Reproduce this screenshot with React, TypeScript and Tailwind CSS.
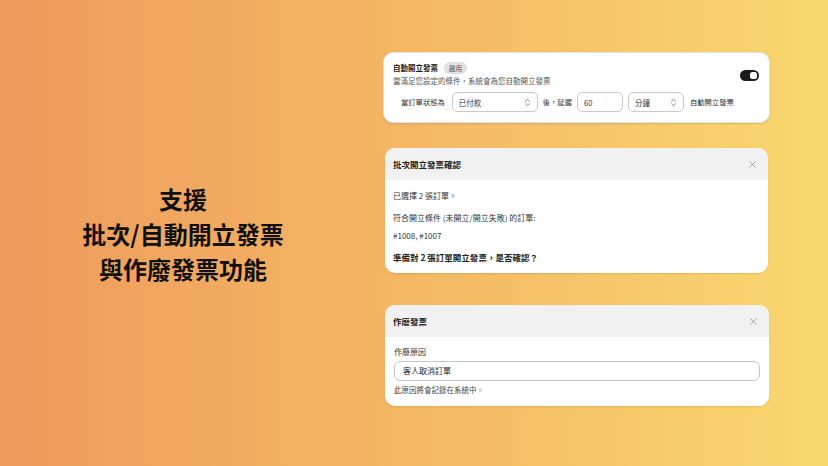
import { X } from 'lucide-react';

const font = { fontFamily: '"Noto Sans CJK TC", "Noto Sans", sans-serif' };

function UpDown() {
  return (
    <svg width="7" height="9" viewBox="0 0 7 9" fill="none" stroke="#777" strokeWidth="0.9" strokeLinecap="round" strokeLinejoin="round">
      <path d="M1.5 3.2 3.5 1.3 5.5 3.2" />
      <path d="M1.5 5.8 3.5 7.7 5.5 5.8" />
    </svg>
  );
}

function Select({ label, width }: { label: string; width: string }) {
  return (
    <div className={`${width} h-[20px] flex items-center justify-between px-[6px] rounded-[5px] border border-[#c9c9c9] bg-white text-[7.5px] text-[#333]`}>
      <span>{label}</span>
      <UpDown />
    </div>
  );
}

function AutoIssueCard() {
  return (
    <div className="w-[387px] h-[71px] bg-white rounded-[10px] border border-[#e4e4e4] shadow-[0_1px_2px_rgba(0,0,0,0.12)] px-[9px] pt-[9px]">
      <div className="flex items-start justify-between">
        <div>
          <div className="flex items-center gap-[6px]">
            <span className="text-[7.5px] font-bold text-[#222]">自動開立發票</span>
            <span className="w-[23px] text-center h-[12px] leading-[12px] rounded-full bg-[#e0e0e0] text-[6.5px] text-[#555]">啟用</span>
          </div>
          <div className="mt-[1px] text-[7.5px] text-[#555]">當滿足您設定的條件，系統會為您自動開立發票</div>
        </div>
        <div className="mt-[8px] mr-[1px] w-[19px] h-[11px] rounded-full bg-[#1a1a1a] flex items-center justify-end pr-[2px]">
          <div className="w-[7px] h-[7px] rounded-[2.5px] bg-white" />
        </div>
      </div>
      <div className="mt-[6px] flex items-center text-[7.3px] text-[#333] pl-[8px]">
        <span className="mr-[7px]">當訂單狀態為</span>
        <Select label="已付款" width="w-[86px]" />
        <span className="mx-[5px]">後，延遲</span>
        <div className="w-[46px] h-[20px] flex items-center px-[6px] rounded-[5px] border border-[#c9c9c9] bg-white text-[7.5px]">60</div>
        <div className="ml-[5px]">
          <Select label="分鐘" width="w-[56px]" />
        </div>
        <span className="ml-[6px]">自動開立發票</span>
      </div>
    </div>
  );
}

function Modal({ title, children }: { title: string; children: React.ReactNode }) {
  return (
    <div className="bg-white rounded-[10px] overflow-hidden shadow-[0_1px_2px_rgba(0,0,0,0.1)]">
      <div className="h-[32px] bg-[#f1f1f1] flex items-center justify-between pl-[8px] pr-[10px]">
        <span className="text-[8.5px] font-bold text-[#222]">{title}</span>
        <X size={11} strokeWidth={1.4} className="text-[#777]" />
      </div>
      {children}
    </div>
  );
}

export default function App() {
  return (
    <div
      className="w-[828px] h-[466px] flex bg-gradient-to-r from-[#ee9a5c] via-[#f4b864] to-[#f9d86f]"
      style={font}
    >
      <div className="w-[366px] flex flex-col items-center justify-center text-[#111] text-[24px] font-bold leading-[35px]">
        <div>支援</div>
        <div>批次/自動開立發票</div>
        <div>與作廢發票功能</div>
      </div>
      <div className="flex flex-col pt-[52px] pl-[17px]">
        <AutoIssueCard />
        <div className="mt-[25px] ml-[2px] w-[383px]">
          <Modal title="批次開立發票確認">
            <div className="px-[8px] pt-[10px] pb-[10px] text-[8px] text-[#333]">
              <div className="leading-[12px]">已選擇 2 張訂單。</div>
              <div className="mt-[10px] leading-[12px]">符合開立條件 (未開立/開立失敗) 的訂單:</div>
              <div className="mt-[6px] leading-[12px]">#1008, #1007</div>
              <div className="mt-[9px] leading-[12px] text-[8.5px] font-bold text-[#222]">準備對 2 張訂單開立發票，是否確認？</div>
            </div>
          </Modal>
        </div>
        <div className="mt-[32px] ml-[2px] w-[384px]">
          <Modal title="作廢發票">
            <div className="px-[9px] pt-[9px] pb-[10px] text-[8px] text-[#333]">
              <div className="leading-[12px]">作廢原因</div>
              <div className="mt-[3px] h-[20px] flex items-center px-[8px] rounded-[6px] border border-[#c4c4c4] text-[8px] text-[#222]">客人取消訂單</div>
              <div className="mt-[3px] leading-[12px] text-[7.5px] text-[#444]">此原因將會記錄在系統中。</div>
            </div>
          </Modal>
        </div>
      </div>
    </div>
  );
}
